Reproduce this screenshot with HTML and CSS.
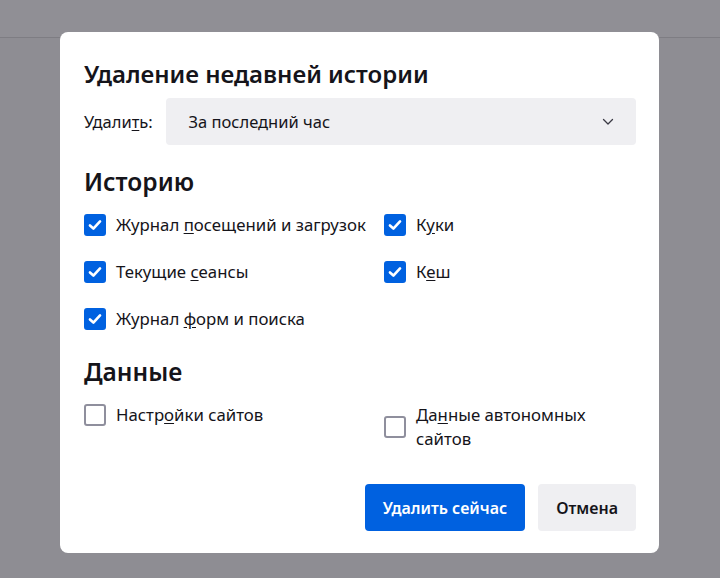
FILE: index.html
```html
<!DOCTYPE html>
<html lang="ru">
<head>
<meta charset="utf-8">
<link rel="stylesheet" href="styles.css">
</head>
<body>
<div class="topbar"></div>
<div class="dialog">
  <h1 class="title">Удаление недавней истории</h1>
  <div class="range-row">
    <span class="range-label">Удали<u>т</u>ь:</span>
    <div class="select">
      <span>За последний час</span>
      <svg class="chev" width="12" height="8" viewBox="0 0 12 8"><path d="M1.5 1.5 L6 6 L10.5 1.5" fill="none" stroke="#3a3944" stroke-width="1.3" stroke-linecap="round" stroke-linejoin="round"/></svg>
    </div>
  </div>
  <h2 class="section">Историю</h2>
  <div class="grid history">
    <label class="item"><span class="box checked"><svg width="16" height="16" viewBox="0 0 14 14"><path d="M2.6 7.4 L5.6 10.1 L11.4 3.9" fill="none" stroke="#fff" stroke-width="2.3" stroke-linecap="round" stroke-linejoin="round"/></svg></span><span class="text">Журнал <u>п</u>осещений и загрузок</span></label>
    <label class="item"><span class="box checked"><svg width="16" height="16" viewBox="0 0 14 14"><path d="M2.6 7.4 L5.6 10.1 L11.4 3.9" fill="none" stroke="#fff" stroke-width="2.3" stroke-linecap="round" stroke-linejoin="round"/></svg></span><span class="text">К<u>у</u>ки</span></label>
    <label class="item"><span class="box checked"><svg width="16" height="16" viewBox="0 0 14 14"><path d="M2.6 7.4 L5.6 10.1 L11.4 3.9" fill="none" stroke="#fff" stroke-width="2.3" stroke-linecap="round" stroke-linejoin="round"/></svg></span><span class="text">Текущие <u>с</u>еансы</span></label>
    <label class="item"><span class="box checked"><svg width="16" height="16" viewBox="0 0 14 14"><path d="M2.6 7.4 L5.6 10.1 L11.4 3.9" fill="none" stroke="#fff" stroke-width="2.3" stroke-linecap="round" stroke-linejoin="round"/></svg></span><span class="text">К<u>е</u>ш</span></label>
    <label class="item"><span class="box checked"><svg width="16" height="16" viewBox="0 0 14 14"><path d="M2.6 7.4 L5.6 10.1 L11.4 3.9" fill="none" stroke="#fff" stroke-width="2.3" stroke-linecap="round" stroke-linejoin="round"/></svg></span><span class="text">Журнал <u>ф</u>орм и поиска</span></label>
  </div>
  <h2 class="section data-head">Данные</h2>
  <div class="grid data">
    <label class="item top"><span class="box"></span><span class="text">Настр<u>о</u>йки сайтов</span></label>
    <label class="item"><span class="box"></span><span class="text narrow">Да<u>н</u>ные автономных сайтов</span></label>
  </div>
  <div class="buttons">
    <button class="btn primary">Удалить сейчас</button>
    <button class="btn">Отмена</button>
  </div>
</div>
</body>
</html>
```
FILE: styles.css
```css
html, body {
  margin: 0;
  height: 100%;
}
body {
  background: #8e8d93;
  font-family: "Noto Sans", "Open Sans", sans-serif;
  color: #15141a;
  position: relative;
  overflow: hidden;
}
.topbar {
  height: 37px;
  background: #908f95;
  border-bottom: 1px solid #7e7d83;
}
.dialog {
  position: absolute;
  left: 60px;
  top: 32px;
  width: 599px;
  height: 521px;
  box-sizing: border-box;
  background: #fff;
  border-radius: 8px;
  padding: 27px 23px 22px 24px;
  display: flex;
  flex-direction: column;
}
.title {
  margin: 0;
  font-size: 24px;
  font-weight: 600;
  line-height: 30px;
}
.range-row {
  margin-top: 9px;
  display: flex;
  align-items: center;
  gap: 13px;
  font-size: 16.5px;
}
.range-label u, .text u {
  text-underline-offset: 2px;
}
.select {
  flex: 1;
  height: 47px;
  background: #efeff2;
  border-radius: 4px;
  display: flex;
  align-items: center;
  justify-content: space-between;
  padding: 0 22px 0 23px;
}
.section {
  margin: 22px 0 0;
  font-size: 24.5px;
  font-weight: 600;
  line-height: 30px;
}
.data-head {
  margin-top: 26px;
}
.grid {
  margin-top: 16px;
  display: grid;
  grid-template-columns: 300px 1fr;
  row-gap: 23px;
  font-size: 16.8px;
}
.item {
  display: flex;
  align-items: center;
  gap: 10px;
  line-height: 24px;
}
.item.top {
  align-self: start;
}
.box {
  width: 22px;
  height: 22px;
  box-sizing: border-box;
  border: 2px solid #8f8f9d;
  border-radius: 3px;
  display: flex;
  align-items: center;
  justify-content: center;
  flex: none;
}
.box.checked {
  background: #0061e0;
  border-color: #0061e0;
}
.narrow {
  max-width: 200px;
}
.buttons {
  margin-top: auto;
  display: flex;
  justify-content: flex-end;
  gap: 13px;
}
.btn {
  height: 47px;
  border: none;
  border-radius: 4px;
  background: #efeff2;
  color: #15141a;
  font-family: inherit;
  font-size: 16px;
  font-weight: 600;
  padding: 0 18px;
}
.btn.primary {
  background: #0061e0;
  color: #fff;
}
```
